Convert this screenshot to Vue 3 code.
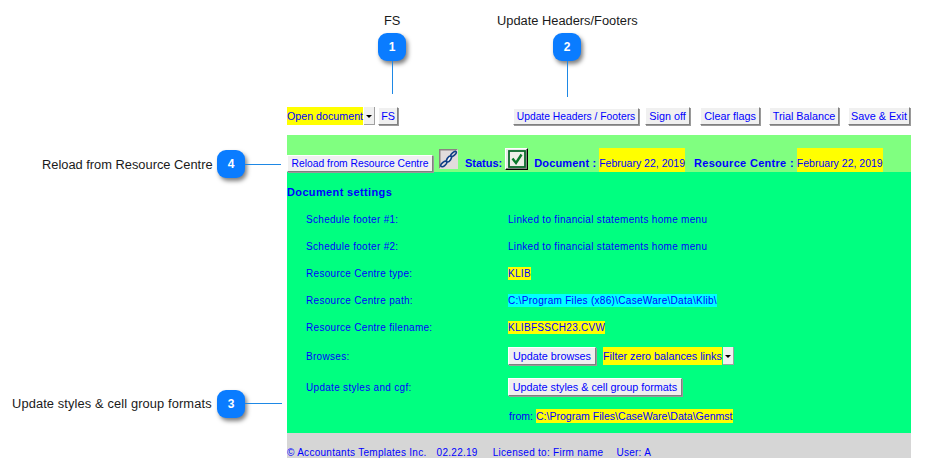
<script setup>
const rows = [
  { label: 'Schedule footer #1:', value: 'Linked to financial statements home menu' },
  { label: 'Schedule footer #2:', value: 'Linked to financial statements home menu' },
  { label: 'Resource Centre type:', value: 'KLIB', tone: 'yellow' },
  { label: 'Resource Centre path:', value: 'C:\\Program Files (x86)\\CaseWare\\Data\\Klib\\', tone: 'cyan' },
  { label: 'Resource Centre filename:', value: 'KLIBFSSCH23.CVW', tone: 'yellow' },
]
const callouts = [
  { n: 1, cls: 'c1' },
  { n: 2, cls: 'c2' },
  { n: 3, cls: 'c3' },
  { n: 4, cls: 'c4' },
]
</script>

<template>
  <div class="page">
    <div class="sheet">
      <div class="toolbar">
        <div class="group">
          <span class="select open"><span class="hl">Open document</span><span class="arrow"></span></span>
          <button class="btn fs">FS</button>
        </div>
        <div class="group right">
          <button class="btn small hf">Update Headers / Footers</button>
          <button class="btn so">Sign off</button>
          <button class="btn cf">Clear flags</button>
          <button class="btn tb">Trial Balance</button>
          <button class="btn se">Save &amp; Exit</button>
        </div>
      </div>

      <div class="band">
        <button class="btn small reload">Reload from Resource Centre</button>
        <span class="link-icon">
          <svg width="19" height="20" viewBox="0 0 19 20">
            <path d="M0 0H19V20H0Z" fill="#e2dcdc" />
            <path d="M0 0H19L17 1.5H1.5V18L0 20Z" fill="#8a8282" />
            <path d="M7 13L12 8" stroke="#fff" stroke-width="3" />
            <ellipse cx="4.8" cy="15" rx="3.6" ry="1.8" transform="rotate(-40 4.8 15)" fill="none" stroke="#0f3f86" stroke-width="1.6" />
            <ellipse cx="10" cy="10" rx="3.4" ry="1.7" transform="rotate(-55 10 10)" fill="none" stroke="#0f3f86" stroke-width="1.6" />
            <ellipse cx="14.5" cy="5" rx="3.4" ry="1.5" transform="rotate(-40 14.5 5)" fill="none" stroke="#0f3f86" stroke-width="1.6" />
          </svg>
        </span>
        <b class="status">Status:</b>
        <span class="check">
          <svg width="18" height="18" viewBox="0 0 18 18">
            <rect x="1" y="1" width="16" height="16" fill="#efefe8" stroke="#0a6a2a" stroke-width="1.8" />
            <path d="M4.5 8.5L8 13L13.5 4.5" fill="none" stroke="#0a7a2a" stroke-width="2.4" />
          </svg>
        </span>
        <b class="doc">Document :</b>
        <span class="date">February 22, 2019</span>
        <b class="rc">Resource Centre :</b>
        <span class="date">February 22, 2019</span>
      </div>

      <div class="body">
        <h3 class="title">Document settings</h3>
        <div v-for="r in rows" :key="r.label" class="row">
          <span class="label">{{ r.label }}</span>
          <span class="value"><span :class="r.tone">{{ r.value }}</span></span>
        </div>
        <div class="row browses">
          <span class="label">Browses:</span>
          <span class="value">
            <button class="btn ub">Update browses</button>
            <span class="select filter"><span class="hl">Filter zero balances links</span><span class="arrow"></span></span>
          </span>
        </div>
        <div class="row styles">
          <span class="label">Update styles and cgf:</span>
          <span class="value"><button class="btn us">Update styles &amp; cell group formats</button></span>
        </div>
        <div class="row from">
          <span class="label"></span>
          <span class="value">from: <span class="yellow">C:\Program Files\CaseWare\Data\Genmst</span></span>
        </div>
      </div>

      <div class="footer">
        <span>© Accountants Templates Inc.</span>
        <span class="f1">02.22.19</span>
        <span class="f2">Licensed to: Firm name</span>
        <span class="f3">User: A</span>
      </div>
    </div>

    <span class="cap cap-fs">FS</span>
    <span class="cap cap-hf">Update Headers/Footers</span>
    <span class="cap cap-rl">Reload from Resource Centre</span>
    <span class="cap cap-us">Update styles &amp; cell group formats</span>

    <span v-for="c in callouts" :key="c.n" class="badge" :class="c.cls">{{ c.n }}</span>
    <i class="line l1"></i>
    <i class="line l2"></i>
    <i class="line l3"></i>
    <i class="line l4"></i>
  </div>
</template>

<style scoped>
.page {
  position: relative;
  width: 928px;
  height: 470px;
  padding: 107px 0 0 287px;
  box-sizing: border-box;
  overflow: hidden;
  background: #fff;
  font-family: "Liberation Sans", Arial, sans-serif;
  font-size: 10px;
  color: #0000ff;
}
.sheet {
  width: 624px;
}
.toolbar {
  display: flex;
  justify-content: space-between;
  align-items: flex-start;
  height: 28px;
}
.group {
  display: flex;
  align-items: flex-start;
  gap: 3px;
}
.group.right {
  gap: 9px;
  margin-right: 1px;
}
.btn {
  height: 18px;
  padding: 0;
  box-sizing: border-box;
  background: #f0f0f0;
  border: 1px solid;
  border-color: #fff #808080 #808080 #fff;
  box-shadow: 1px 1px 0 #9a9a9a;
  font: 10.8px "Liberation Sans", Arial, sans-serif;
  color: #0000ff;
  white-space: nowrap;
}
.btn.small {
  font-size: 10.3px;
}
.fs { width: 20px; }
.hf { width: 126px; height: 17px; margin-top: 1px; margin-right: -3px; }
.so { width: 45px; margin-right: 1px; }
.cf { width: 60px; }
.tb { width: 70px; }
.se { width: 62px; }
.ub { width: 88px; }
.us { width: 174px; }
.select {
  display: inline-flex;
  align-items: center;
  height: 18px;
  font-size: 10.8px;
}
.select.open {
  font-size: 10.7px;
}
.hl {
  background: #ffff00;
  height: 18px;
  line-height: 18px;
  white-space: nowrap;
}
.arrow {
  display: inline-block;
  position: relative;
  width: 11px;
  height: 18px;
  margin-left: 1px;
  background: #f0f0f0;
  border-right: 1px solid #a0a0a0;
  border-bottom: 1px solid #a0a0a0;
  box-sizing: border-box;
}
.arrow::after {
  content: "";
  position: absolute;
  left: 2px;
  top: 8px;
  border: 3px solid transparent;
  border-top: 3px solid #000;
  border-bottom: 0;
}
.band {
  height: 37px;
  background: #80ff80;
  display: flex;
  align-items: flex-end;
  font-size: 11px;
}
.reload {
  width: 146px;
  height: 17px;
  flex: none;
  text-align: center;
}
.link-icon {
  margin: 0 0 3px 6px;
  height: 20px;
  width: 19px;
  flex: none;
}
.status {
  margin: 0 3px 2px 7px;
  font-size: 11px;
  line-height: 13px;
}
.check {
  width: 23px;
  height: 22px;
  margin: 0 6px 2px 0;
  background: #e8e8e8;
  border: 1px solid;
  border-color: #fff #000 #000 #fff;
  box-shadow: inset -1px -1px 0 #808080;
  box-sizing: border-box;
  display: flex;
  align-items: center;
  justify-content: center;
}
.doc {
  margin: 0 3px 2px 0;
  line-height: 13px;
  letter-spacing: 0.14px;
  white-space: nowrap;
}
.date {
  height: 24px;
  line-height: 31px;
  background: #ffff00;
  font-size: 10.5px;
  white-space: nowrap;
}
.rc {
  margin: 0 3px 2px 9px;
  line-height: 13px;
  letter-spacing: 0.3px;
  white-space: nowrap;
}
.body {
  height: 261px;
  background: #00ff80;
  box-sizing: border-box;
  padding-top: 14px;
}
.title {
  margin: 0 0 14px;
  font-size: 11px;
  line-height: 13px;
  font-weight: bold;
  letter-spacing: 0.36px;
}
.row {
  display: grid;
  grid-template-columns: 221px 1fr;
  height: 27px;
  line-height: 13px;
  letter-spacing: 0.3px;
  white-space: nowrap;
}
.label {
  padding-left: 19px;
}
.value {
  display: flex;
  align-items: flex-start;
  gap: 3px;
  white-space: pre;
}
.yellow {
  background: #ffff00;
}
.cyan {
  background: #00ffff;
}
.browses {
  height: 31px;
  letter-spacing: 0;
}
.browses .label,
.styles .label {
  letter-spacing: 0.3px;
  padding-top: 2px;
}
.browses .value {
  margin-top: -1px;
  gap: 7px;
}
.styles {
  height: 30px;
  letter-spacing: 0;
}
.styles .value {
  margin-top: -1px;
}
.from {
  font-size: 10.55px;
  letter-spacing: 0;
  line-height: 14px;
}
.from .value {
  gap: 0;
  padding-left: 1px;
}
.footer {
  height: 25px;
  box-sizing: border-box;
  padding-top: 14px;
  background: #d6d6d6;
  line-height: 12px;
  display: flex;
  font-size: 10px;
  letter-spacing: 0.28px;
  white-space: nowrap;
}
.f1 { margin-left: 10px; }
.f2 { margin-left: 15px; }
.f3 { margin-left: 13px; }

.cap {
  position: absolute;
  font-size: 12.85px;
  line-height: 14px;
  color: #1a1a1a;
  white-space: nowrap;
}
.cap-fs { left: 384px; top: 14px; }
.cap-hf { left: 497px; top: 14px; }
.cap-rl { left: 42px; top: 158px; }
.cap-us { left: 12px; top: 397px; letter-spacing: 0.12px; }

.badge {
  position: absolute;
  width: 28px;
  height: 28px;
  border-radius: 9px;
  background: #0a7cff;
  color: #fff;
  font-size: 12px;
  font-weight: bold;
  line-height: 28px;
  text-align: center;
  box-shadow: 2px 3px 4px rgba(0, 0, 0, 0.5);
}
.c1 { left: 378px; top: 33px; }
.c2 { left: 553px; top: 33px; }
.c3 { left: 217px; top: 390px; }
.c4 { left: 217px; top: 150px; }

.line {
  position: absolute;
  background: #1e88e5;
}
.l1 { left: 392px; top: 61px; width: 1px; height: 33px; }
.l2 { left: 567px; top: 61px; width: 1px; height: 36px; }
.l3 { left: 245px; top: 403px; width: 37px; height: 1px; }
.l4 { left: 245px; top: 164px; width: 36px; height: 1px; }
</style>
